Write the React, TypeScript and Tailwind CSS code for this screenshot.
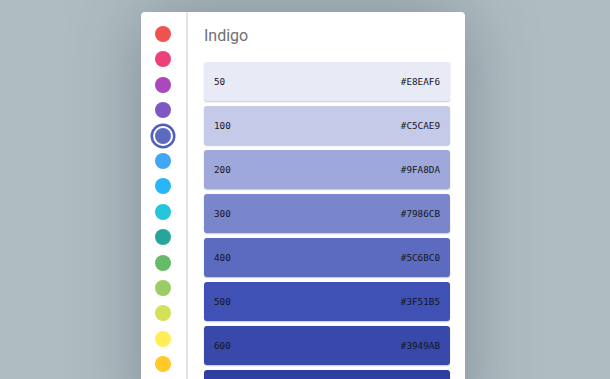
import type { ReactNode } from 'react'

const dots = [
  '#EF5350',
  '#EC407A',
  '#AB47BC',
  '#7E57C2',
  '#5C6BC0',
  '#42A5F5',
  '#29B6F6',
  '#26C6DA',
  '#26A69A',
  '#66BB6A',
  '#9CCC65',
  '#D4E157',
  '#FFEE58',
  '#FFCA28',
  '#FFA726',
]

const shades: [string, string][] = [
  ['50', '#E8EAF6'],
  ['100', '#C5CAE9'],
  ['200', '#9FA8DA'],
  ['300', '#7986CB'],
  ['400', '#5C6BC0'],
  ['500', '#3F51B5'],
  ['600', '#3949AB'],
  ['700', '#303F9F'],
]

export default function App(): ReactNode {
  return (
    <div className="h-[379px] overflow-hidden bg-[#afbdc3] pt-[12px]">
      <div className="ml-[141px] flex h-[420px] w-[324px] rounded-[4px] bg-white shadow-[0_0_70px_rgba(40,55,62,0.35)]">
        {/* colour picker */}
        <div className="flex w-[47px] shrink-0 flex-col items-center gap-[9.4px] border-r-2 border-[#e3e3e3] pt-[14px] pr-[2px]">
          {dots.map((c, i) => (
            <div
              key={c}
              className={
                i === 4
                  ? 'h-4 w-4 shrink-0 rounded-full shadow-[0_0_0_2px_#fff,0_0_0_4.5px_#4f5fbb]'
                  : 'h-4 w-4 shrink-0 rounded-full'
              }
              style={{ backgroundColor: c }}
            />
          ))}
        </div>

        {/* shades */}
        <div className="flex-1 pl-[16px] pr-[15px]">
          <h1 className="pt-[14px] font-['Roboto',sans-serif] text-[16px] leading-[20px] font-normal text-[#707070]">
            Indigo
          </h1>
          <div className="mt-[16px] flex flex-col gap-[5px]">
            {shades.map(([name, hex]) => (
              <div
                key={name}
                className="flex h-[39px] items-center justify-between rounded-[3px] px-[10px] font-['DejaVu_Sans_Mono',monospace] text-[9.3px] text-[#15151c] shadow-[0_1px_1.5px_rgba(0,0,0,0.22)]"
                style={{ backgroundColor: hex }}
              >
                <span>{name}</span>
                <span>{hex}</span>
              </div>
            ))}
          </div>
        </div>
      </div>
    </div>
  )
}
